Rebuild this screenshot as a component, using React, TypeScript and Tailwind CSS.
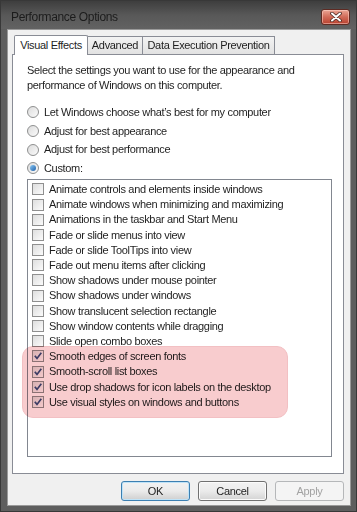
import React from 'react'

const effects: [string, boolean][] = [
    ['Animate controls and elements inside windows', false],
    ['Animate windows when minimizing and maximizing', false],
    ['Animations in the taskbar and Start Menu', false],
    ['Fade or slide menus into view', false],
    ['Fade or slide ToolTips into view', false],
    ['Fade out menu items after clicking', false],
    ['Show shadows under mouse pointer', false],
    ['Show shadows under windows', false],
    ['Show translucent selection rectangle', false],
    ['Show window contents while dragging', false],
    ['Slide open combo boxes', false],
    ['Smooth edges of screen fonts', true],
    ['Smooth-scroll list boxes', true],
    ['Use drop shadows for icon labels on the desktop', true],
    ['Use visual styles on windows and buttons', true],
]

const radios = [
    'Let Windows choose what\u2019s best for my computer',
    'Adjust for best appearance',
    'Adjust for best performance',
    'Custom:',
]

const Radio = ({ on }: { on: boolean }) => (
    <span className="w-[12px] h-[12px] rounded-full border border-[#8e8f8f] bg-gradient-to-br from-[#dcdcdc] to-[#fbfbfb] flex items-center justify-center shrink-0">
        {on && <span className="w-[6px] h-[6px] rounded-full bg-gradient-to-br from-[#8ccaf5] to-[#1c5fa8]" />}
    </span>
)

const Check = ({ on }: { on: boolean }) => (
    <span className="w-[12px] h-[12px] border border-[#8f8f8f] bg-gradient-to-br from-[#dedede] to-[#fbfbfb] flex items-center justify-center shrink-0">
        {on && (
            <svg width="10" height="10" viewBox="0 0 10 10">
                <path d="M1.8 4.8 L4 7.4 L8.3 1.8" fill="none" stroke="#3e4a7c" strokeWidth="1.7" />
            </svg>
        )}
    </span>
)

const Button = ({ label, kind }: { label: string; kind: 'default' | 'normal' | 'disabled' }) => {
    const styles = {
        default: 'border-[#3c7fb1] bg-gradient-to-b from-[#f2f2f2] via-[#ebebeb] to-[#cfcfcf] text-[#1e1e1e] shadow-[inset_0_0_0_1px_#bfe3f8]',
        normal: 'border-[#707070] bg-gradient-to-b from-[#f2f2f2] via-[#ebebeb] to-[#d4d4d4] text-[#1e1e1e] shadow-[inset_0_0_0_1px_#fbfbfb]',
        disabled: 'border-[#b5b7b9] bg-[#f4f4f4] text-[#a2a2a2]',
    }[kind]
    return (
        <button className={`w-[69px] h-[20px] rounded-[3px] border text-[11px] tracking-[-0.3px] leading-none flex items-center justify-center ${styles}`}>
            {label}
        </button>
    )
}

export default function App() {
    return (
        <div className="relative w-[357px] h-[512px] bg-[#5e5e5e] border border-[#383838] flex flex-col font-['Liberation_Sans',Arial,sans-serif] overflow-hidden">
            {/* title bar */}
            <div className="h-[28px] shrink-0 flex items-center justify-between pl-[10px] pr-[6px] pt-[3px] bg-gradient-to-b from-[#3e3e3e] via-[#585858] to-[#626262]">
                <span className="text-[12px] text-[#1c1c1c] tracking-[-0.35px]">Performance Options</span>
                <div className="w-[29px] h-[16px] rounded-[3px] border border-[#5e2a22] bg-gradient-to-b from-[#eaa595] via-[#d06a58] to-[#b8402e] flex items-center justify-center shadow-[inset_0_0_0_1px_rgba(255,220,210,0.5)]">
                    <svg width="12" height="10" viewBox="0 0 12 10">
                        <path d="M2 1.5 L10 8.5 M10 1.5 L2 8.5" stroke="#4a2a24" strokeWidth="3.6" strokeLinecap="round" />
                        <path d="M2 1.5 L10 8.5 M10 1.5 L2 8.5" stroke="#fff" strokeWidth="2" strokeLinecap="round" />
                    </svg>
                </div>
            </div>

            {/* client area */}
            <div className="ml-[6px] w-[344px] h-[477px] bg-[#f0f0f0] border border-[#9a9a9a] flex flex-col tracking-[-0.33px]">
                {/* tabs */}
                <div className="flex items-end h-[24px] pl-[6px] pt-[4px] text-[11px] text-[#1e1e1e]">
                    <div className="relative z-10 h-[20px] w-[74px] bg-white border border-b-0 border-[#898c95] rounded-t-[2px] flex items-center justify-center -mb-px pb-px">
                        Visual Effects
                    </div>
                    <div className="h-[18px] w-[55px] bg-gradient-to-b from-[#f3f3f3] to-[#e2e2e2] border border-b-0 border-l-0 border-[#898c95] flex items-center justify-center">
                        Advanced
                    </div>
                    <div className="h-[18px] w-[132px] bg-gradient-to-b from-[#f3f3f3] to-[#e2e2e2] border border-b-0 border-l-0 border-[#898c95] flex items-center justify-center">
                        Data Execution Prevention
                    </div>
                </div>

                {/* tab page */}
                <div className="ml-[4px] w-[332px] h-[420px] bg-white border border-[#898c95] pl-[14px] pt-[8px] flex flex-col text-[11px] text-[#1e1e1e]">
                    <p className="leading-[15px]">
                        Select the settings you want to use for the appearance and
                        <br />
                        performance of Windows on this computer.
                    </p>
                    <div className="mt-[10px] flex flex-col">
                        {radios.map((r, i) => (
                            <div key={r} className="h-[18.7px] flex items-center gap-[5px]">
                                <Radio on={i === 3} />
                                <span>{r}</span>
                            </div>
                        ))}
                    </div>
                    <div className="mt-[1px] w-[305px] h-[278px] border border-[#828790] pl-[4px] pt-[2px] flex flex-col">
                        {effects.map(([label, on]) => (
                            <div key={label} className="h-[15.2px] flex items-center gap-[5px]">
                                <Check on={on} />
                                <span>{label}</span>
                            </div>
                        ))}
                    </div>
                </div>

                {/* buttons */}
                <div className="flex justify-end gap-[8px] pr-[6px] mt-[7px]">
                    <Button label="OK" kind="default" />
                    <Button label="Cancel" kind="normal" />
                    <Button label="Apply" kind="disabled" />
                </div>
            </div>

            {/* highlight annotation */}
            <div className="absolute left-[21px] top-[345px] w-[266px] h-[72px] rounded-[11px] bg-[#f8ccce] border border-[#f2c0c3] mix-blend-multiply pointer-events-none" />
        </div>
    )
}
